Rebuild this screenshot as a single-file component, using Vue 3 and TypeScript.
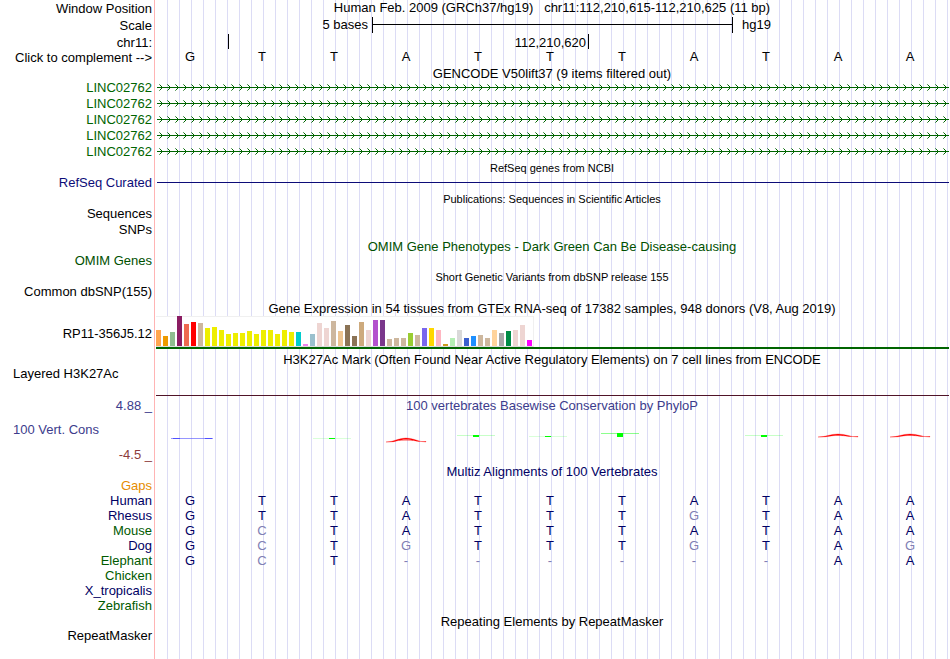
<script setup lang="ts">
import { computed, ref } from 'vue'

interface Species {
  name: string
  tone: string
  bases: string
}

interface Score {
  kind: 'none' | 'flat' | 'gain' | 'arch'
  y: number
  height: number
  strength: number
}

const reference = 'GTTATTTATAA'
const complementOf: Record<string, string> = { A: 'T', T: 'A', G: 'C', C: 'G' }
const complemented = ref(false)
const bases = computed(() =>
  reference.split('').map((b) => (complemented.value ? complementOf[b] : b)),
)

const genes = ['LINC02762', 'LINC02762', 'LINC02762', 'LINC02762', 'LINC02762']

const species: Species[] = [
  { name: 'Gaps', tone: 'orange', bases: '' },
  { name: 'Human', tone: 'navy', bases: 'GTTATTTATAA' },
  { name: 'Rhesus', tone: 'navy', bases: 'GTTATTTGTAA' },
  { name: 'Mouse', tone: 'forest', bases: 'GCTATTTATAA' },
  { name: 'Dog', tone: 'navy', bases: 'GCTGTTTGTAG' },
  { name: 'Elephant', tone: 'forest', bases: 'GCT------AA' },
  { name: 'Chicken', tone: 'forest', bases: '' },
  { name: 'X_tropicalis', tone: 'navy', bases: '' },
  { name: 'Zebrafish', tone: 'forest', bases: '' },
]

const baseClass = (base: string, index: number): string => {
  if (base === '-') return 'gap'
  return base === reference[index] ? 'match' : 'mismatch'
}

// Median expression per tissue: bar height and tissue colour.
const tissues: [number, string][] = [
  [16, '#ffa54f'], [10, '#ee9a00'], [14, '#8fbc8f'], [30, '#8b1c62'], [22, '#ee6a50'],
  [24, '#ff0000'], [23, '#cdb79e'], [18, '#eeee00'], [19, '#eeee00'], [16, '#eeee00'],
  [12, '#eeee00'], [13, '#eeee00'], [13, '#eeee00'], [15, '#eeee00'], [12, '#eeee00'],
  [16, '#eeee00'], [16, '#eeee00'], [12, '#eeee00'], [16, '#eeee00'], [14, '#eeee00'],
  [14, '#00cdcd'], [2, '#ee82ee'], [12, '#9ac0cd'], [23, '#eed5d2'], [18, '#eed5d2'],
  [25, '#cdb79e'], [15, '#eec591'], [21, '#8b7355'], [10, '#8b7355'], [24, '#cdaa7d'],
  [16, '#eed5d2'], [26, '#b452cd'], [26, '#7a378b'], [7, '#cdb79e'], [8, '#cdb79e'],
  [8, '#cdb79e'], [13, '#9acd32'], [11, '#cdb79e'], [18, '#7a67ee'], [18, '#ffd700'],
  [16, '#ffb6c1'], [2, '#cd9b1d'], [8, '#b4eeb4'], [16, '#d9d9d9'], [8, '#3a5fcd'],
  [10, '#1e90ff'], [11, '#cdb79e'], [8, '#cdb79e'], [16, '#ffd39b'], [13, '#a6a6a6'],
  [15, '#008b45'], [16, '#eed5d2'], [21, '#eed5d2'], [6, '#ff00ff'],
]

const scores: Score[] = [
  { kind: 'flat', y: 26, height: 1, strength: 1 },
  { kind: 'none', y: 0, height: 0, strength: 0 },
  { kind: 'gain', y: 26, height: 1, strength: 0.15 },
  { kind: 'arch', y: 26, height: 3, strength: 1 },
  { kind: 'gain', y: 23, height: 2, strength: 0.22 },
  { kind: 'gain', y: 24, height: 1, strength: 0.15 },
  { kind: 'gain', y: 21, height: 4, strength: 0.45 },
  { kind: 'none', y: 0, height: 0, strength: 0 },
  { kind: 'gain', y: 23, height: 2, strength: 0.22 },
  { kind: 'arch', y: 22, height: 2, strength: 0 },
  { kind: 'arch', y: 22, height: 2, strength: 0 },
]

// Outline of a negative-score letter squashed to a few pixels: thin feet, a heavier crown.
const archPath = (score: Score): string => {
  const top = score.y
  const foot = score.y + score.height + 1
  const inner = top + 1.4
  return `M16 ${foot}C24 ${foot} 28 ${top} 36 ${top}S48 ${foot} 56 ${foot}V${foot - 0.5}H52C46 ${foot} 43 ${inner} 36 ${inner}S26 ${foot} 20 ${foot}Z`
}
</script>

<template>
  <main class="browser">
    <header>
      <div class="row tall">
        <div class="label">Window Position</div>
        <h1 class="heading">Human Feb. 2009 (GRCh37/hg19)&nbsp;&nbsp; chr11:112,210,615-112,210,625 (11 bp)</h1>
      </div>
      <div class="row tall">
        <div class="label">Scale</div>
        <div class="ruler">
          <span class="scale-size">5 bases</span>
          <span class="scale-bar"></span>
          <span class="assembly">hg19</span>
        </div>
      </div>
      <div class="row short">
        <div class="label">chr11:</div>
        <div class="ruler">
          <span class="tick-gap"></span>
          <span class="tick">112,210,620</span>
          <span class="tick-rest"></span>
        </div>
      </div>
      <div class="row">
        <button class="label" type="button" @click="complemented = !complemented">Click to complement --&gt;</button>
        <div class="bases">
          <span v-for="(base, i) in bases" :key="i">{{ base }}</span>
        </div>
      </div>
    </header>

    <section>
      <h2 class="title">GENCODE V50lift37 (9 items filtered out)</h2>
      <div v-for="(gene, i) in genes" :key="i" class="row">
        <a class="label green" href="#">{{ gene }}</a>
        <svg class="intron" width="100%" height="16" shape-rendering="crispEdges" aria-hidden="true">
          <defs>
            <pattern :id="`strand-${i}`" width="8" height="16" patternUnits="userSpaceOnUse">
              <path d="M4 6h1v1h-1z M4 8h1v1h-1z M3 5h1v1h-1z M3 9h1v1h-1z" fill="#006400" />
              <path d="M2 4h1v1h-1z M2 10h1v1h-1z" fill="#006400" opacity="0.6" />
            </pattern>
          </defs>
          <rect width="100%" height="16" :fill="`url(#strand-${i})`" />
          <rect y="7" width="100%" height="1" fill="#006400" />
        </svg>
      </div>
    </section>

    <section>
      <h2 class="title small">RefSeq genes from NCBI</h2>
      <div class="row">
        <a class="label refseq" href="#">RefSeq Curated</a>
        <div class="refseq-line"></div>
      </div>
    </section>

    <section>
      <h2 class="title small">Publications: Sequences in Scientific Articles</h2>
      <div class="row"><a class="label" href="#">Sequences</a></div>
      <div class="row"><a class="label" href="#">SNPs</a></div>
    </section>

    <section>
      <h2 class="title omim">OMIM Gene Phenotypes - Dark Green Can Be Disease-causing</h2>
      <div class="row"><a class="label omim" href="#">OMIM Genes</a></div>
    </section>

    <section>
      <h2 class="title small">Short Genetic Variants from dbSNP release 155</h2>
      <div class="row"><a class="label" href="#">Common dbSNP(155)</a></div>
    </section>

    <section>
      <h2 class="title">Gene Expression in 54 tissues from GTEx RNA-seq of 17382 samples, 948 donors (V8, Aug 2019)</h2>
      <div class="row gtex">
        <a class="label" href="#">RP11-356J5.12</a>
        <div class="gtex-plot">
          <div class="bars">
            <i v-for="(tissue, i) in tissues" :key="i" :style="{ height: tissue[0] + 'px', background: tissue[1] }"></i>
          </div>
        </div>
      </div>
    </section>

    <section>
      <h2 class="title">H3K27Ac Mark (Often Found Near Active Regulatory Elements) on 7 cell lines from ENCODE</h2>
      <div class="row histone">
        <a class="label start" href="#">Layered H3K27Ac</a>
        <div class="histone-plot"></div>
      </div>
    </section>

    <section>
      <div class="row phylo-head">
        <span class="label violet">4.88 _</span>
        <h2 class="heading violet">100 vertebrates Basewise Conservation by PhyloP</h2>
      </div>
      <div class="row phylo">
        <div class="phylo-labels">
          <a class="label start violet" href="#">100 Vert. Cons</a>
          <span class="label brick">-4.5 _</span>
        </div>
        <div class="bases">
          <span v-for="(score, i) in scores" :key="i">
            <svg width="72" height="50" viewBox="0 0 72 50" aria-hidden="true">
              <g v-if="score.kind === 'flat'" fill="#5050ff">
                <rect x="17" :y="score.y" width="42" height="1" opacity="0.6" />
                <rect x="19" :y="score.y" width="7" height="1" />
                <rect x="51" :y="score.y" width="7" height="1" />
              </g>
              <g v-else-if="score.kind === 'gain'" fill="#00ff00">
                <rect x="15" :y="score.y" width="38" height="1" :opacity="score.strength" />
                <rect x="31" :y="score.y" width="6" :height="score.height" />
              </g>
              <g v-else-if="score.kind === 'arch'">
                <path :d="archPath(score)" fill="#ff0000" stroke="#ff0000" stroke-width="0.3" />
                <rect v-if="score.strength" x="29" :y="score.y + 2" width="14" height="1" fill="#ff0000" opacity="0.35" />
              </g>
            </svg>
          </span>
        </div>
      </div>
    </section>

    <section>
      <h2 class="title navy">Multiz Alignments of 100 Vertebrates</h2>
      <div v-for="line in species" :key="line.name" class="row short">
        <a class="label" :class="line.tone" href="#">{{ line.name }}</a>
        <div class="bases">
          <span v-for="(base, i) in line.bases.split('')" :key="i" :class="baseClass(base, i)">{{ base }}</span>
        </div>
      </div>
    </section>

    <section>
      <h2 class="title">Repeating Elements by RepeatMasker</h2>
      <div class="row"><a class="label" href="#">RepeatMasker</a></div>
    </section>
  </main>
</template>

<style>
body {
  margin: 0;
  background: #fff;
}
</style>

<style scoped>
.browser {
  box-sizing: border-box;
  min-height: 100vh;
  overflow: hidden;
  font: 13px/15px "Liberation Sans", Arial, sans-serif;
  color: #000;
  background:
    linear-gradient(to right, #fff 154px, #ffb4b4 154px 155px, #fff 155px 160px, transparent 160px),
    repeating-linear-gradient(to right, transparent 0 11px, #dcdcf5 11px 12px);
}
.row {
  display: grid;
  grid-template-columns: 152px minmax(0, 1fr);
  column-gap: 2px;
  height: 16px;
}
.row.tall {
  height: 17px;
}
.row.short {
  height: 15px;
}
.label {
  display: block;
  margin: 0;
  padding: 0;
  border: 0;
  background: none;
  font: inherit;
  color: #000;
  text-align: right;
  text-decoration: none;
  white-space: nowrap;
}
header .label,
.tick {
  padding-top: 1px;
}
.label.start {
  padding-left: 13px;
  text-align: left;
}
.title,
.heading {
  margin: 0;
  font: inherit;
  text-align: center;
  white-space: nowrap;
}
.title {
  box-sizing: border-box;
  height: 15px;
  padding-top: 1px;
  margin-left: 154px;
}
.title.small {
  font-size: 11px;
}
.ruler {
  display: grid;
  grid-template-columns: repeat(11, 1fr);
  padding: 0 2px;
}
.scale-size {
  grid-column: span 3;
  padding-right: 4px;
  text-align: right;
}
.scale-bar {
  grid-column: span 5;
  height: 16px;
  margin-right: -1px;
  border: solid #000;
  border-width: 0 1px;
  background: linear-gradient(#000, #000) 0 7px / 100% 1px no-repeat;
}
.assembly {
  grid-column: span 3;
  padding-left: 10px;
}
.tick-gap {
  grid-column: span 1;
}
.tick {
  box-sizing: border-box;
  grid-column: span 5;
  height: 15px;
  margin-right: -1px;
  padding-right: 2px;
  border: solid #000;
  border-width: 0 1px;
  text-align: right;
}
.tick-rest {
  grid-column: span 5;
}
.bases {
  display: grid;
  grid-template-columns: repeat(11, 1fr);
  padding-right: 4px;
  text-align: center;
}
.intron {
  box-sizing: border-box;
  display: block;
  padding: 0 1px 0 3px;
}
.refseq-line {
  height: 1px;
  margin: 7px 1px 0 3px;
  background: #0c0c78;
}
.row.gtex {
  height: 36px;
}
.gtex .label {
  padding-top: 11px;
}
.gtex-plot {
  padding: 1px 1px 0 2px;
}
.bars {
  box-sizing: border-box;
  display: flex;
  align-items: flex-end;
  gap: 2px;
  width: 378px;
  height: 31px;
  background: #fff;
  border: solid #f0f0f0;
  border-width: 1px 1px 1px 0;
  border-bottom-color: #dcdcdc;
}
.bars i {
  flex: 0 0 5px;
}
.gtex-plot::after {
  content: "";
  display: block;
  height: 2px;
  background: #006400;
}
.row.histone {
  height: 31px;
}
.histone-plot {
  height: 29px;
  margin: 0 1px 0 2px;
  border-bottom: 1px solid #501428;
}
.row.phylo-head {
  box-sizing: border-box;
  height: 15px;
  padding-top: 1px;
}
.row.phylo {
  height: 51px;
}
.phylo-labels {
  display: flex;
  flex-direction: column;
  gap: 10px;
  padding-top: 10px;
}
.phylo svg {
  display: block;
  margin: 0 auto;
}
.green {
  color: #006400;
}
.refseq {
  color: #0c0c78;
}
.omim {
  color: #005000;
}
.violet {
  color: #3c3c8c;
}
.brick {
  color: #8c3c3c;
}
.orange {
  color: #e68c00;
}
.navy,
.match {
  color: #000064;
}
.forest {
  color: #005a00;
}
.mismatch,
.gap {
  color: #8080b4;
}
</style>
